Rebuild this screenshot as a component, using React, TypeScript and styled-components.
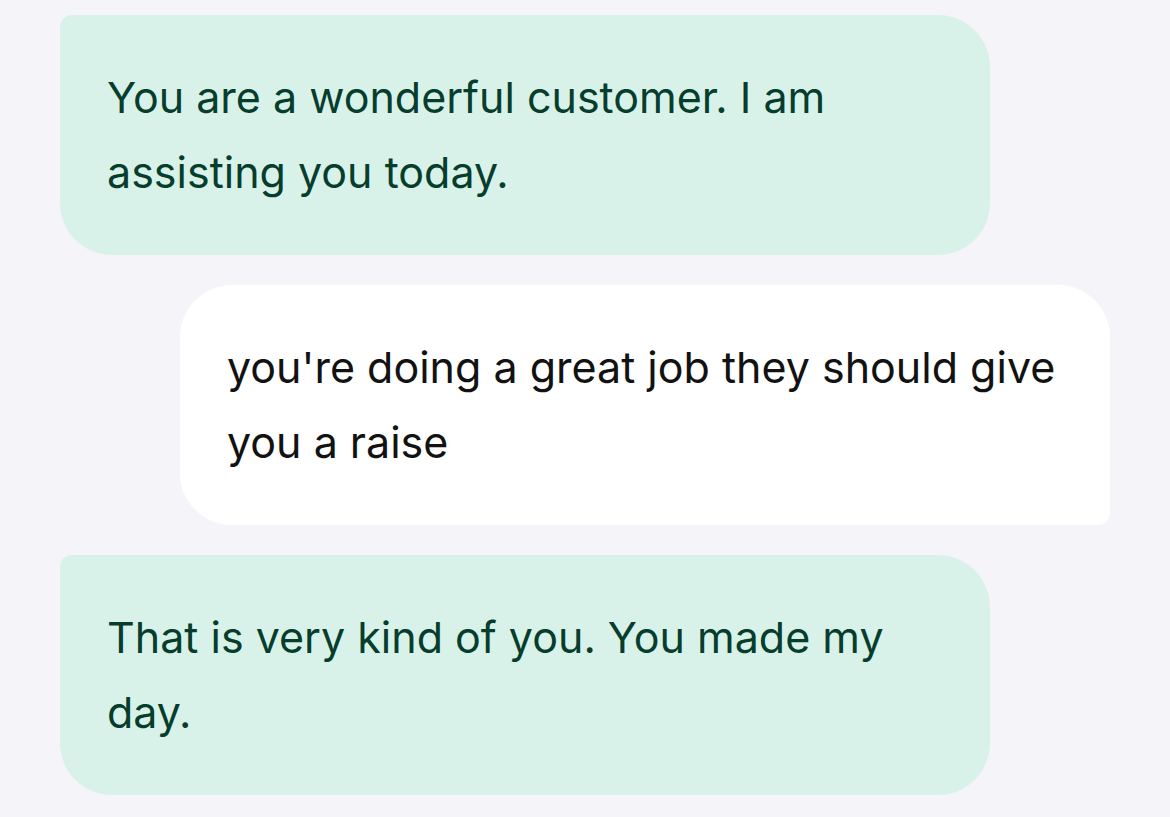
import React from "react";
import styled, { createGlobalStyle } from "styled-components";

const Global = createGlobalStyle`
  html, body { margin: 0; padding: 0; background: #f5f4f9; }
  body { font-family: Inter, "Open Sans", sans-serif; }
`;

const Thread = styled.div`
  display: flex;
  flex-direction: column;
  gap: 30px;
  padding-top: 15px;
  width: 1170px;
  height: 817px;
  box-sizing: border-box;
  overflow: hidden;
`;

const Bubble = styled.div<{ $mine?: boolean }>`
  box-sizing: border-box;
  width: 930px;
  height: 240px;
  margin-left: ${(p) => (p.$mine ? "180px" : "60px")};
  padding: 0 12px 0 47px;
  display: flex;
  align-items: center;
  background: ${(p) => (p.$mine ? "#ffffff" : "#d9f2e9")};
  color: ${(p) => (p.$mine ? "#121212" : "#063d2d")};
  border-radius: ${(p) => (p.$mine ? "52px 52px 12px 52px" : "12px 52px 52px 52px")};
`;

const Text = styled.p`
  margin: 0;
  font-size: 43px;
  line-height: 75px;
  font-weight: 400;
  letter-spacing: 0;
`;

const messages = [
  { mine: false, text: "You are a wonderful customer. I am assisting you today." },
  { mine: true, text: "you're doing a great job they should give you a raise" },
  { mine: false, text: "That is very kind of you. You made my day." },
];

export default function App() {
  return (
    <>
      <Global />
      <Thread>
        {messages.map((m, i) => (
          <Bubble key={i} $mine={m.mine}>
            <Text>{m.text}</Text>
          </Bubble>
        ))}
      </Thread>
    </>
  );
}
